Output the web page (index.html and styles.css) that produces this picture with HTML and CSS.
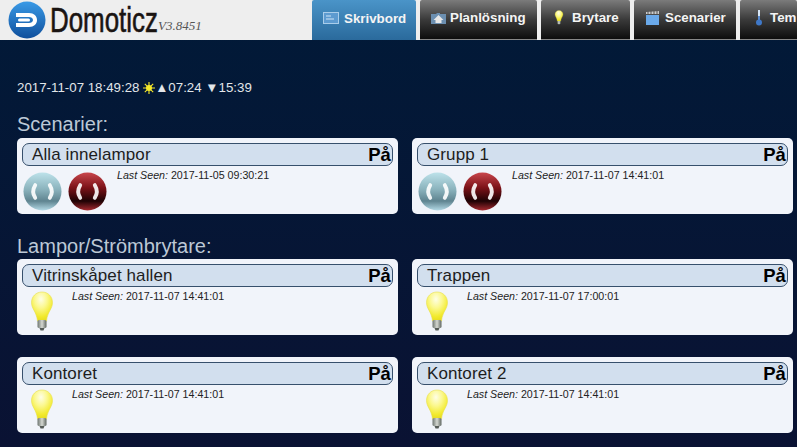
FILE: index.html
```html
<!DOCTYPE html>
<html lang="en">
<head>
    <meta charset="UTF-8" />
    <title>Domoticz</title>
    <link rel="stylesheet" href="styles.css">
</head>
<body>
    <svg class="defs" width="0" height="0">
        <defs>
            <radialGradient id="bulbGlass" cx="0.45" cy="0.25" r="0.75">
                <stop offset="0" stop-color="#fefee6" />
                <stop offset="0.4" stop-color="#fbf88e" />
                <stop offset="0.8" stop-color="#f2ea2c" />
                <stop offset="1" stop-color="#e6dc20" />
            </radialGradient>
            <linearGradient id="bulbBase" x1="0" x2="1" y1="0" y2="0">
                <stop offset="0" stop-color="#6d7570" />
                <stop offset="0.5" stop-color="#d5d8d2" />
                <stop offset="1" stop-color="#5f6660" />
            </linearGradient>
            <linearGradient id="btnBlue" x1="0" x2="0" y1="0" y2="1">
                <stop offset="0" stop-color="#bde2ea" />
                <stop offset="0.45" stop-color="#8ab2bc" />
                <stop offset="0.75" stop-color="#5f8490" />
                <stop offset="1" stop-color="#b4dae6" />
            </linearGradient>
            <linearGradient id="btnRed" x1="0" x2="0" y1="0" y2="1">
                <stop offset="0" stop-color="#c9464c" />
                <stop offset="0.4" stop-color="#7c1218" />
                <stop offset="0.75" stop-color="#1e0204" />
                <stop offset="1" stop-color="#a82a30" />
            </linearGradient>
            <linearGradient id="logoBlue" x1="0" x2="0" y1="0" y2="1">
                <stop offset="0" stop-color="#3a9ae6" />
                <stop offset="1" stop-color="#0f4f9c" />
            </linearGradient>
            <symbol id="bulb" viewBox="0 0 26 40">
                <path d="M13 1C7 1 2.500 5.500 2.500 11.500c0 6.500 5 9 6 18.500h9c1-9.500 6-12 6-18.500C23.500 5.500 19 1 13 1z" fill="url(#bulbGlass)" stroke="#e8df50" stroke-width="0.6" />
                <rect x="8.500" y="29" width="9" height="8" rx="1.500" fill="url(#bulbBase)" />
                <path d="M10.500 37h5l-1 2.500h-3z" fill="#555b57" />
            </symbol>
            <symbol id="brackets" viewBox="0 0 40 40">
                <path d="M12.500 13.500c-2.500 4-2.500 9 0 13M27.500 13.500c2.500 4 2.500 9 0 13" fill="none" stroke="#fff" stroke-width="4" stroke-linecap="round" opacity="0.9" />
            </symbol>
        </defs>
    </svg>

    <header class="topbar">
        <div class="brand">
            <svg class="logo" viewBox="0 0 38 38" width="38" height="38">
                <circle cx="19" cy="19" r="18.500" fill="url(#logoBlue)" />
                <path d="M8 12h13c5 0 8 3 8 7s-3 7-8 7H8v-4h13c2 0 4-1 4-3s-2-3-4-3H8z" fill="#fff" />
                <rect x="10" y="17.500" width="12" height="3" rx="1.500" fill="#fff" />
            </svg>
            <span class="brand-name">Domoticz</span>
            <span class="brand-version">V3.8451</span>
        </div>
        <nav class="tabs">
            <a class="tab tab-active tab-home">
                <svg class="tab-icon" viewBox="0 0 16 12" width="16" height="12"><rect width="16" height="12" fill="#a9cdea" /><rect x="1" y="1" width="14" height="10" fill="#5d9bd0" /><path d="M3 4h5M3 7h8" stroke="#cfe4f5" /></svg>
                Skrivbord
            </a>
            <a class="tab tab-plan">
                <svg class="tab-icon" viewBox="0 0 15 12" width="15" height="12"><path d="M0 2h5l1-1h3v1h6v10H0z" fill="#6c8fb0" /><path d="M7.500 3L2.500 8h2v3h6V8h2z" fill="#e8e8e8" /></svg>
                Planlösning
            </a>
            <a class="tab tab-switch">
                <svg class="tab-icon" width="10" height="15"><use href="#bulb" /></svg>
                Brytare
            </a>
            <a class="tab tab-scene">
                <svg class="tab-icon" viewBox="0 0 13 14" width="13" height="14"><rect y="4" width="13" height="10" fill="#6aa9ea" /><path d="M0 1l13-1v3H0z" fill="#ccc" /><path d="M2 0v3M5 0v3M8 0v3M11 0v3" stroke="#555" /></svg>
                Scenarier
            </a>
            <a class="tab tab-temp">
                <svg class="tab-icon" viewBox="0 0 8 16" width="8" height="16"><rect x="3" y="0" width="2" height="11" fill="#d7e6f6" /><circle cx="4" cy="12.500" r="3" fill="#3f78c8" /><rect x="3.200" y="6" width="1.600" height="6" fill="#3f78c8" /></svg>
                Tem
            </a>
        </nav>
    </header>

    <main class="content">
        <div class="clock">2017-11-07 18:49:28 <svg class="sun" viewBox="0 0 12 12" width="12" height="12"><circle cx="6" cy="6" r="3" fill="#f6e92a" /><path d="M6 0v12M0 6h12M1.800 1.800l8.400 8.400M10.200 1.800l-8.400 8.400" stroke="#f6e92a" stroke-width="1.100" /></svg><span class="arrow">▲</span>07:24 <span class="arrow">▼</span>15:39</div>

        <h2 class="section-title">Scenarier:</h2>
        <section class="cards cards-scenes">
            <article class="card">
                <div class="card-head"><span>Alla innelampor</span><b>På</b></div>
                <div class="card-body">
                    <div class="scene-btns">
                        <svg class="round" viewBox="0 0 40 40"><circle cx="20" cy="20" r="19.500" fill="url(#btnBlue)" /><use href="#brackets" /></svg>
                        <svg class="round" viewBox="0 0 40 40"><circle cx="20" cy="20" r="19.500" fill="url(#btnRed)" /><use href="#brackets" /></svg>
                    </div>
                    <p class="seen"><i>Last Seen:</i> 2017-11-05 09:30:21</p>
                </div>
            </article>
            <article class="card">
                <div class="card-head"><span>Grupp 1</span><b>På</b></div>
                <div class="card-body">
                    <div class="scene-btns">
                        <svg class="round" viewBox="0 0 40 40"><circle cx="20" cy="20" r="19.500" fill="url(#btnBlue)" /><use href="#brackets" /></svg>
                        <svg class="round" viewBox="0 0 40 40"><circle cx="20" cy="20" r="19.500" fill="url(#btnRed)" /><use href="#brackets" /></svg>
                    </div>
                    <p class="seen"><i>Last Seen:</i> 2017-11-07 14:41:01</p>
                </div>
            </article>
        </section>

        <h2 class="section-title">Lampor/Strömbrytare:</h2>
        <section class="cards cards-lights">
            <article class="card">
                <div class="card-head"><span>Vitrinskåpet hallen</span><b>På</b></div>
                <div class="card-body">
                    <svg class="lamp"><use href="#bulb" /></svg>
                    <p class="seen"><i>Last Seen:</i> 2017-11-07 14:41:01</p>
                </div>
            </article>
            <article class="card">
                <div class="card-head"><span>Trappen</span><b>På</b></div>
                <div class="card-body">
                    <svg class="lamp"><use href="#bulb" /></svg>
                    <p class="seen"><i>Last Seen:</i> 2017-11-07 17:00:01</p>
                </div>
            </article>
            <article class="card">
                <div class="card-head"><span>Kontoret</span><b>På</b></div>
                <div class="card-body">
                    <svg class="lamp"><use href="#bulb" /></svg>
                    <p class="seen"><i>Last Seen:</i> 2017-11-07 14:41:01</p>
                </div>
            </article>
            <article class="card">
                <div class="card-head"><span>Kontoret 2</span><b>På</b></div>
                <div class="card-body">
                    <svg class="lamp"><use href="#bulb" /></svg>
                    <p class="seen"><i>Last Seen:</i> 2017-11-07 14:41:01</p>
                </div>
            </article>
        </section>
    </main>
</body>
</html>
```

FILE: styles.css
```css
html, body {
    height: 100%;
}

body {
    margin: 0;
    overflow: hidden;
    background: linear-gradient(180deg, #011a38, #0a1233);
    font-family: 'Liberation Sans', Arial, sans-serif;
}

.defs {
    display: block;
    height: 0;
}

.topbar {
    display: flex;
    height: 40px;
    background-color: #eeeeee;
    overflow: hidden;
}

.brand {
    display: flex;
    align-items: flex-start;
    width: 312px;
    flex-shrink: 0;
    padding-left: 8px;
    box-sizing: border-box;
}

.logo {
    margin-top: 1px;
    flex-shrink: 0;
}

.brand-name {
    width: 107px;
    flex-shrink: 0;
    margin-left: 4px;
    font-size: 35px;
    line-height: 40px;
    color: #1a1412;
    white-space: nowrap;
    -webkit-text-stroke: 0.6px #1a1412;
    transform: scaleX(0.74);
    transform-origin: left center;
}

.brand-version {
    margin: 17px 0 0 1px;
    font-family: 'Liberation Serif', serif;
    font-style: italic;
    font-size: 13px;
    line-height: 18px;
    color: #555555;
}

.tabs {
    display: flex;
    gap: 4px;
    white-space: nowrap;
}

.tab {
    display: flex;
    align-items: center;
    box-sizing: border-box;
    height: 40px;
    padding-bottom: 4px;
    border-radius: 2px 2px 0 0;
    background: linear-gradient(180deg, #7b7b7b, #3a3a3a 50%, #0d0d0d);
    border-bottom: 1px solid #888888;
    color: #f4f4f4;
    font-size: 13.33px;
    font-weight: bold;
    flex-shrink: 0;
}

.tab-active {
    background: linear-gradient(180deg, #4a94c8, #2a6a9c);
    border-bottom: none;
}

.tab-icon {
    flex-shrink: 0;
}

.tab-home {
    width: 104px;
    padding-left: 11px;
    gap: 5px;
}

.tab-plan {
    width: 117px;
    padding-left: 11px;
    gap: 4px;
}

.tab-switch {
    width: 89px;
    padding-left: 13px;
    gap: 8px;
}

.tab-scene {
    width: 102px;
    padding-left: 12px;
    gap: 6px;
}

.tab-temp {
    width: 57px;
    padding-left: 15px;
    gap: 7px;
}

.content {
    padding: 40px 4px 0 17px;
}

.clock {
    height: 16px;
    color: #e2e6ea;
    font-size: 13.3px;
    line-height: 16px;
    white-space: nowrap;
}

.sun {
    vertical-align: -2px;
}

.section-title {
    margin: 0;
    color: #bcc8d6;
    font-size: 20px;
    font-weight: normal;
    line-height: 22px;
}

.cards {
    display: grid;
    grid-template-columns: 381px 381px;
    column-gap: 14px;
    row-gap: 22px;
}

.clock + .section-title {
    margin-top: 17px;
    margin-bottom: 3px;
}

.cards + .section-title {
    margin-top: 21px;
    margin-bottom: 2px;
}

.card {
    height: 76px;
    box-sizing: border-box;
    padding: 5px;
    border-radius: 5px;
    background-color: #f1f4fa;
}

.card-head {
    display: flex;
    justify-content: space-between;
    align-items: center;
    box-sizing: border-box;
    height: 23px;
    padding: 0 1px 0 9px;
    border: 1px solid #37506c;
    border-radius: 7px;
    background-color: #d2dfee;
    color: #1d1d1d;
    font-size: 17px;
    letter-spacing: 0.1px;
}

.card-head b {
    color: #000000;
    font-size: 18.5px;
}

.card-body {
    display: flex;
    align-items: flex-start;
    padding-top: 1px;
}

.scene-btns {
    display: flex;
    gap: 6px;
    margin: 5px 0 0 1px;
}

.round {
    width: 39px;
    height: 39px;
}

.lamp {
    width: 26px;
    height: 40px;
    margin: 3px 0 0 7px;
}

.seen {
    margin: 2px 0 0 10px;
    color: #222222;
    font-size: 10.67px;
    line-height: 12px;
}

.cards-lights .seen {
    margin-left: 17px;
}
```
